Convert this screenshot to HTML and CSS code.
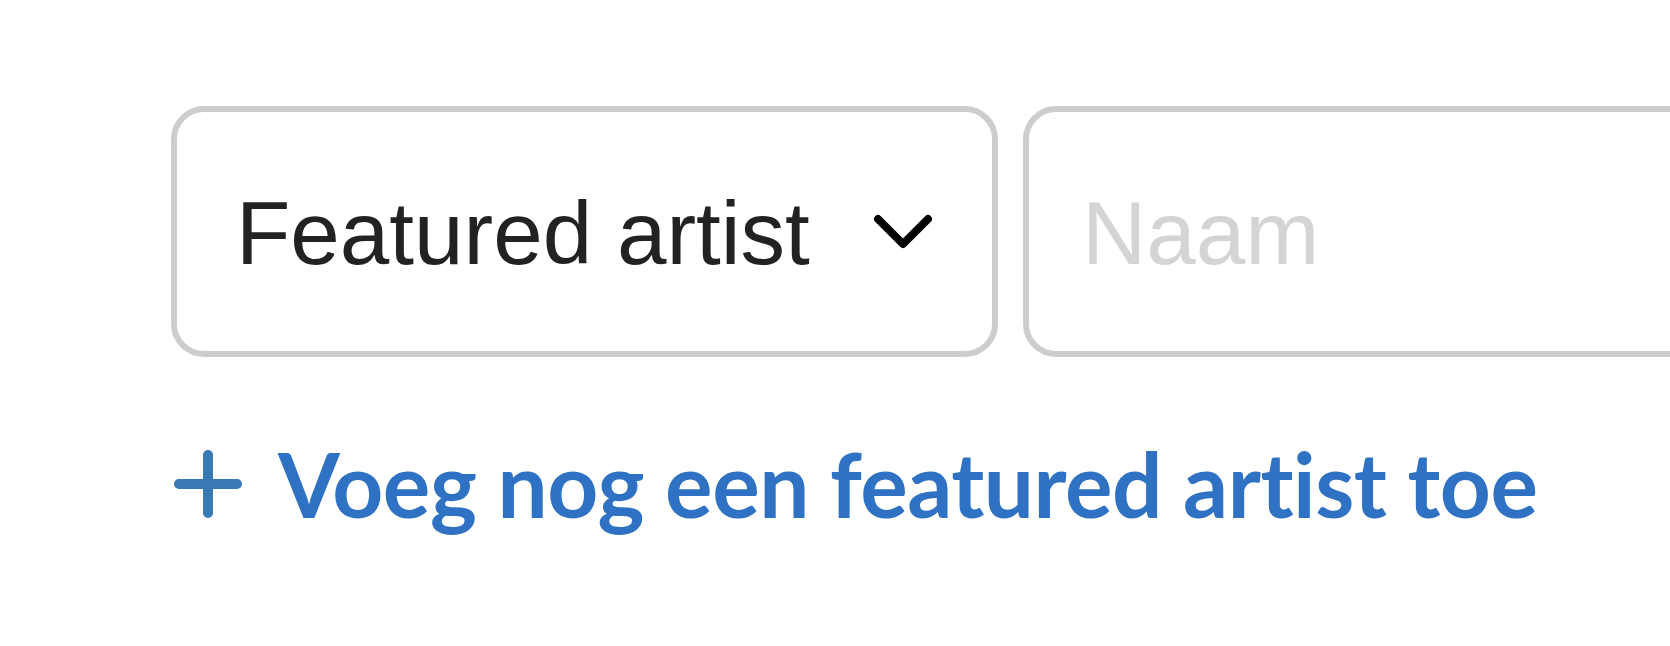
FILE: index.html
```html
<!DOCTYPE html>
<html lang="nl">
<head>
    <meta charset="UTF-8">
    <meta name="viewport" content="width=device-width, initial-scale=1.0">
    <title>Featured artist</title>
    <link rel="stylesheet" href="styles.css">
</head>
<body>
    <div id="artistForm">
        <!-- Role select + name input -->
        <div class="artist-row">
            <div class="field select-field">
                <span class="field-value">Featured artist</span>
                <svg class="chevron" width="60" height="36" viewBox="0 0 60 36">
                    <polyline points="5,5 30,30 55,5" fill="none" stroke="#000" stroke-width="8" stroke-linecap="round" stroke-linejoin="round"/>
                </svg>
            </div>
            <div class="field input-field">
                <span class="placeholder">Naam</span>
            </div>
        </div>

        <!-- Add another artist -->
        <a class="add-link" href="#">
            <svg class="plus" width="68" height="68" viewBox="0 0 68 68">
                <path d="M5 34 H63 M34 5 V63" fill="none" stroke="#3879b5" stroke-width="10" stroke-linecap="round"/>
            </svg>
            <span>Voeg nog een featured artist toe</span>
        </a>
    </div>
</body>
</html>
```

FILE: styles.css
```css
/* Reset margin for body */
body {
    margin: 0;
    overflow: hidden;
    background-color: #fff;
}

#artistForm {
    padding: 106px 0 0 171px;
}

.artist-row {
    display: flex;
    gap: 25px;
}

.field {
    box-sizing: border-box;
    height: 251px;
    width: 827px;
    flex-shrink: 0;
    border: 6px solid #cdcdcd; /* Light grey border */
    border-radius: 33px;
    display: flex;
    align-items: center;
    font-family: "Liberation Sans", Arial, sans-serif;
    font-size: 89px;
    line-height: 1;
}

.field-value,
.placeholder {
    padding-top: 4px;
}

.select-field {
    justify-content: space-between;
    padding: 0 59px 0 59px;
    color: #222;
}

.input-field {
    padding: 0 59px 0 53px;
}

.placeholder {
    color: #d4d4d4;
}

.chevron {
    display: block;
}

.add-link {
    display: inline-flex;
    align-items: center;
    gap: 36px;
    margin-top: 73px;
    margin-left: 3px;
    color: #2f72c4;
    text-decoration: none;
    font-family: Lato, "Open Sans", sans-serif;
    font-weight: bold;
    font-size: 89px;
    letter-spacing: -0.5px;
    line-height: 108px;
}

.plus {
    display: block;
}
```
